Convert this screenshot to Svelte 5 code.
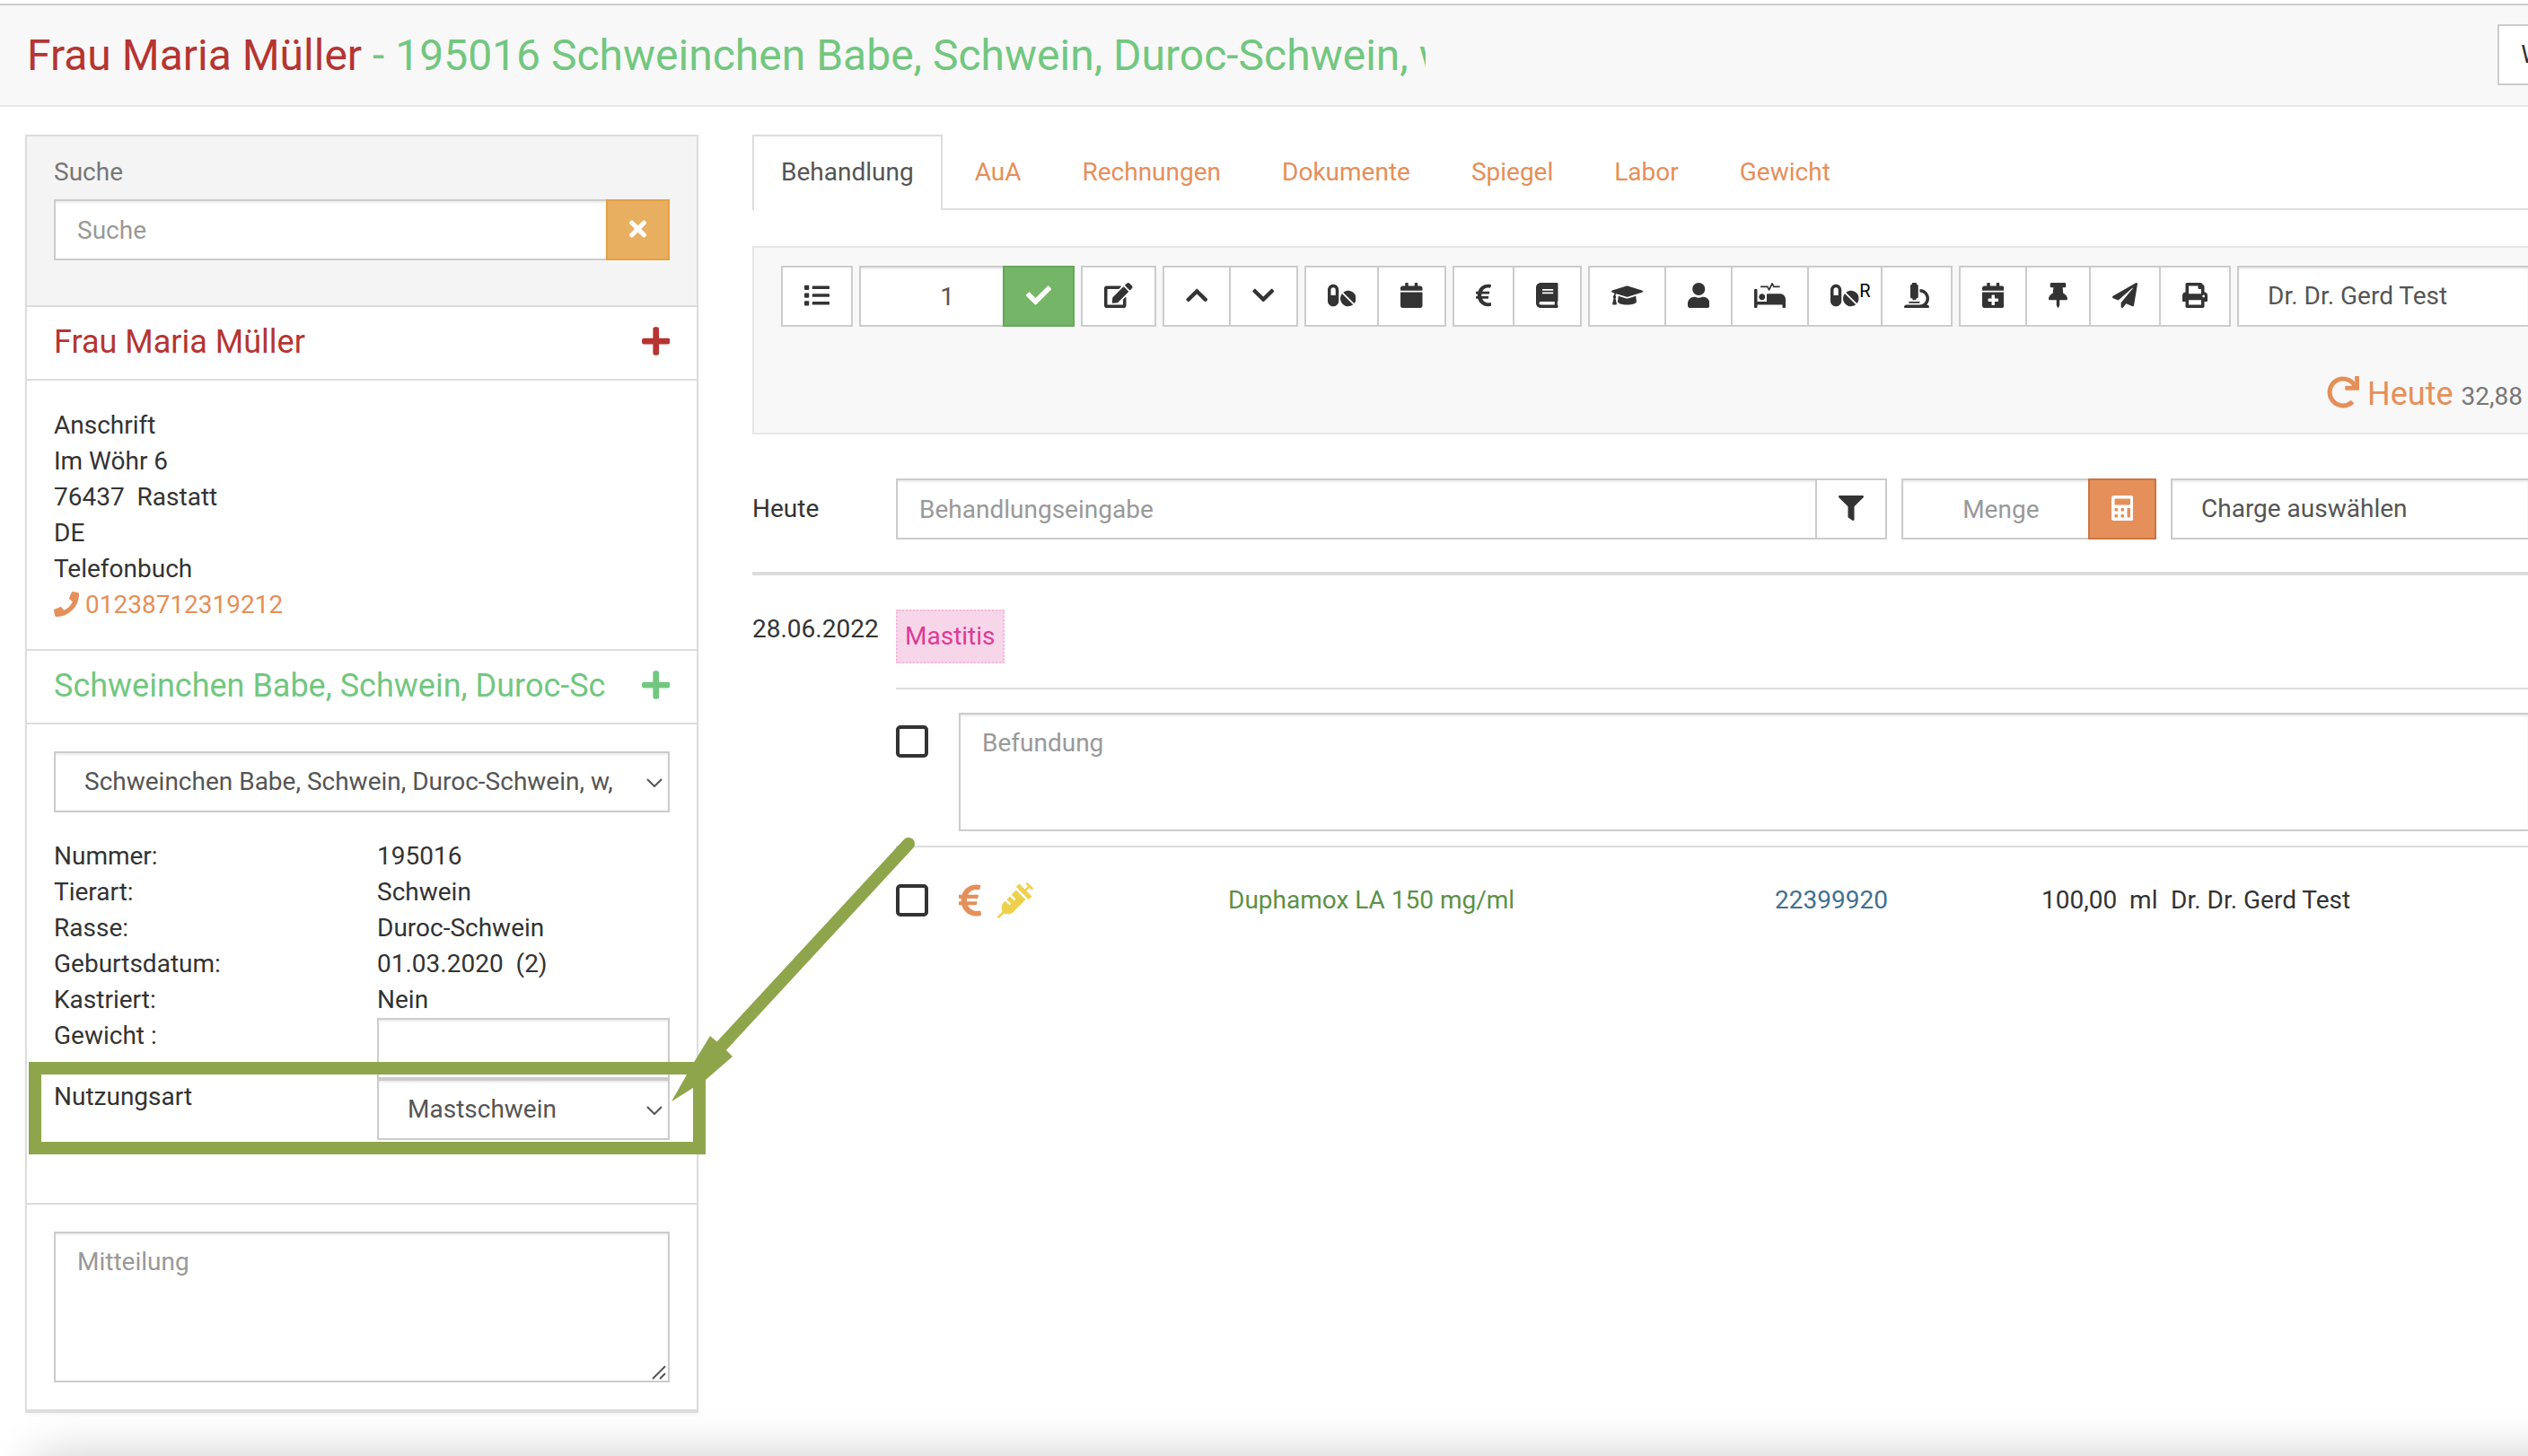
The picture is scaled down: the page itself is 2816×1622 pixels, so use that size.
<script>
  const icons = {
    list: [512, 'M80 368H16a16 16 0 0 0-16 16v64a16 16 0 0 0 16 16h64a16 16 0 0 0 16-16v-64a16 16 0 0 0-16-16zm0-320H16A16 16 0 0 0 0 64v64a16 16 0 0 0 16 16h64a16 16 0 0 0 16-16V64a16 16 0 0 0-16-16zm0 160H16a16 16 0 0 0-16 16v64a16 16 0 0 0 16 16h64a16 16 0 0 0 16-16v-64a16 16 0 0 0-16-16zm416 176H176a16 16 0 0 0-16 16v32a16 16 0 0 0 16 16h320a16 16 0 0 0 16-16v-32a16 16 0 0 0-16-16zm0-320H176a16 16 0 0 0-16 16v32a16 16 0 0 0 16 16h320a16 16 0 0 0 16-16V80a16 16 0 0 0-16-16zm0 160H176a16 16 0 0 0-16 16v32a16 16 0 0 0 16 16h320a16 16 0 0 0 16-16v-32a16 16 0 0 0-16-16z'],
    check: [512, 'M173.898 439.404l-166.4-166.4c-9.997-9.997-9.997-26.206 0-36.204l36.203-36.204c9.997-9.998 26.207-9.998 36.204 0L192 312.69 432.095 72.596c9.997-9.997 26.207-9.997 36.204 0l36.203 36.204c9.997 9.997 9.997 26.206 0 36.204l-294.4 294.401c-9.998 9.997-26.207 9.997-36.204-.001z'],
    times: [352, 'M242.72 256l100.07-100.07c12.28-12.28 12.28-32.19 0-44.48l-22.24-22.24c-12.28-12.28-32.19-12.28-44.48 0L176 189.28 75.93 89.21c-12.28-12.28-32.19-12.28-44.48 0L9.21 111.45c-12.28 12.28-12.28 32.19 0 44.48L109.28 256 9.21 356.07c-12.28 12.28-12.28 32.19 0 44.48l22.24 22.24c12.28 12.28 32.2 12.28 44.48 0L176 322.72l100.07 100.07c12.28 12.28 32.2 12.28 44.48 0l22.24-22.24c12.28-12.28 12.28-32.19 0-44.48L242.72 256z'],
    edit: [576, 'M402.6 83.2l90.2 90.2c3.8 3.8 3.8 10 0 13.8L274.4 405.6l-92.8 10.3c-12.4 1.4-22.9-9.1-21.5-21.5l10.3-92.8L388.8 83.2c3.8-3.8 10-3.8 13.8 0zm162-22.9l-48.8-48.8c-15.2-15.2-39.9-15.2-55.2 0l-35.4 35.4c-3.8 3.8-3.8 10 0 13.8l90.2 90.2c3.8 3.8 10 3.8 13.8 0l35.4-35.4c15.2-15.3 15.2-40 0-55.2zM384 346.2V448H64V128h229.8c3.2 0 6.2-1.3 8.5-3.5l40-40c7.6-7.6 2.2-20.5-8.5-20.5H48C21.5 64 0 85.5 0 112v352c0 26.5 21.5 48 48 48h352c26.5 0 48-21.5 48-48V306.2c0-10.7-12.9-16-20.5-8.5l-40 40c-2.2 2.3-3.5 5.3-3.5 8.5z'],
    up: [448, 'M240.971 130.524l194.343 194.343c9.373 9.373 9.373 24.569 0 33.941l-22.667 22.667c-9.357 9.357-24.522 9.375-33.901.04L224 227.495 69.255 381.516c-9.379 9.335-24.544 9.317-33.901-.04l-22.667-22.667c-9.373-9.373-9.373-24.569 0-33.941L207.03 130.525c9.372-9.373 24.568-9.373 33.941-.001z'],
    down: [448, 'M207.029 381.476L12.686 187.132c-9.373-9.373-9.373-24.569 0-33.941l22.667-22.667c9.357-9.357 24.522-9.375 33.901-.04L224 284.505l154.745-154.021c9.379-9.335 24.544-9.317 33.901.04l22.667 22.667c9.373 9.373 9.373 24.569 0 33.941L240.971 381.476c-9.373 9.372-24.569 9.372-33.942 0z'],
    pills: [576, 'M112 32C50.1 32 0 82.1 0 144v224c0 61.9 50.1 112 112 112s112-50.1 112-112V144c0-61.9-50.1-112-112-112zm48 224H64V144c0-26.5 21.5-48 48-48s48 21.5 48 48v112zm139.7-29.7c-3.5-3.5-9.4-3.1-12.3.8-45.3 62.5-40.4 150.1 15.9 206.4 56.3 56.3 143.9 61.2 206.4 15.9 4-2.9 4.3-8.8.8-12.3L299.7 226.3zm229.8-19c-56.3-56.3-143.9-61.2-206.4-15.9-4 2.9-4.3 8.8-.8 12.3l210.8 210.8c3.5 3.5 9.4 3.1 12.3-.8 45.3-62.6 40.5-150.1-15.9-206.4z'],
    calendar: [448, 'M12 192h424c6.6 0 12 5.4 12 12v260c0 26.5-21.5 48-48 48H48c-26.5 0-48-21.5-48-48V204c0-6.6 5.4-12 12-12zm436-44v-36c0-26.5-21.5-48-48-48h-48V12c0-6.6-5.4-12-12-12h-40c-6.6 0-12 5.4-12 12v52H160V12c0-6.6-5.4-12-12-12h-40c-6.6 0-12 5.4-12 12v52H48C21.5 64 0 85.5 0 112v36c0 6.6 5.4 12 12 12h424c6.6 0 12-5.4 12-12z'],
    euro: [320, 'M310.706 413.765c-1.314-6.63-7.835-10.872-14.424-9.369-10.692 2.439-27.422 5.413-45.426 5.413-56.763 0-101.929-34.79-121.461-85.449h113.689a12 12 0 0 0 11.708-9.369l6.373-28.36c1.686-7.502-4.019-14.631-11.708-14.631H115.22c-1.21-14.328-1.414-28.287.137-42.245H261.95a12 12 0 0 0 11.723-9.434l6.512-29.755c1.638-7.484-4.061-14.566-11.723-14.566H130.184c20.633-44.991 62.69-75.03 117.619-75.03 14.486 0 28.564 2.25 37.851 4.145 6.216 1.268 12.347-2.498 14.002-8.623l11.991-44.368c1.822-6.741-2.465-13.616-9.326-14.917C290.217 34.912 270.71 32 249.635 32 152.451 32 74.03 92.252 45.075 176H12c-6.627 0-12 5.373-12 12v29.755c0 6.627 5.373 12 12 12h21.569c-1.009 13.607-1.181 29.287-.181 42.245H12c-6.627 0-12 5.373-12 12v28.36c0 6.627 5.373 12 12 12h30.114C67.139 414.692 145.264 480 249.635 480c26.301 0 48.562-4.544 61.101-7.788 6.167-1.595 10.027-7.708 8.788-13.957l-8.818-44.49z'],
    book: [448, 'M448 360V24c0-13.3-10.7-24-24-24H96C43 0 0 43 0 96v320c0 53 43 96 96 96h328c13.3 0 24-10.7 24-24v-16c0-7.5-3.5-14.3-8.9-18.7-4.2-15.4-4.2-59.3 0-74.7 5.4-4.3 8.9-11.1 8.9-18.6zM128 134c0-3.3 2.7-6 6-6h212c3.3 0 6 2.7 6 6v20c0 3.3-2.7 6-6 6H134c-3.3 0-6-2.7-6-6v-20zm0 64c0-3.3 2.7-6 6-6h212c3.3 0 6 2.7 6 6v20c0 3.3-2.7 6-6 6H134c-3.3 0-6-2.7-6-6v-20zm253.4 250H96c-17.7 0-32-14.3-32-32 0-17.6 14.4-32 32-32h285.4c-1.9 17.1-1.9 46.9 0 64z'],
    graduation: [640, 'M622.34 153.2L343.4 67.5c-15.2-4.67-31.6-4.67-46.79 0L17.66 153.2c-23.54 7.23-23.54 38.36 0 45.59l48.63 14.94c-10.67 13.19-17.23 29.28-17.88 46.9C38.78 266.15 32 276.11 32 288c0 10.78 5.68 19.85 13.86 25.65L20.33 428.53C18.11 438.52 25.71 448 35.94 448h56.11c10.24 0 17.84-9.48 15.62-19.47L82.14 313.65C90.32 307.85 96 298.78 96 288c0-11.57-6.47-21.25-15.66-26.87.76-15.02 8.44-28.3 20.69-36.72L296.6 284.5c9.06 2.78 26.44 6.25 46.79 0l278.95-85.7c23.55-7.24 23.55-38.36 0-45.6zM352.79 315.09c-28.53 8.76-52.84 3.92-65.59 0l-145.02-44.55L128 384c0 35.35 85.96 64 192 64s192-28.65 192-64l-14.18-113.47-145.03 44.56z'],
    user: [448, 'M224 256c70.7 0 128-57.3 128-128S294.7 0 224 0 96 57.3 96 128s57.3 128 128 128zm89.6 32h-16.7c-22.2 10.2-46.9 16-72.9 16s-50.6-5.8-72.9-16h-16.7C60.2 288 0 348.2 0 422.4V464c0 26.5 21.5 48 48 48h352c26.5 0 48-21.5 48-48v-41.6c0-74.2-60.2-134.4-134.4-134.4z'],
    bed: [640, 'M528 224H272c-8.8 0-16 7.2-16 16v144H64V144c0-8.8-7.2-16-16-16H16c-8.8 0-16 7.2-16 16v352c0 8.8 7.2 16 16 16h32c8.8 0 16-7.2 16-16v-48h512v48c0 8.8 7.2 16 16 16h32c8.8 0 16-7.2 16-16V336c0-61.9-50.1-112-112-112zM136 96h126.1l27.6 55.2c5.9 11.8 22.7 11.8 28.6 0L368 51.8 390.1 96H512c8.8 0 16-7.2 16-16s-7.2-16-16-16H409.9L382.3 8.8C376.4-3 359.6-3 353.7 8.8L304 108.2l-19.9-39.8c-1.4-2.7-4.1-4.4-7.2-4.4H136c-4.4 0-8 3.6-8 8v16c0 4.4 3.6 8 8 8zm24 256c35.3 0 64-28.7 64-64s-28.7-64-64-64-64 28.7-64 64 28.7 64 64 64z'],
    microscope: [512, 'M160 320h12v16c0 8.84 7.16 16 16 16h40c8.84 0 16-7.16 16-16v-16h12c17.67 0 32-14.33 32-32V64c0-17.67-14.33-32-32-32V16c0-8.84-7.16-16-16-16h-64c-8.84 0-16 7.16-16 16v16c-17.67 0-32 14.33-32 32v224c0 17.67 14.33 32 32 32zm304 128h-1.29C493.24 413.99 512 369.2 512 320c0-105.88-86.12-192-192-192v64c70.58 0 128 57.42 128 128s-57.42 128-128 128H48c-26.51 0-48 21.49-48 48 0 8.84 7.16 16 16 16h480c8.84 0 16-7.16 16-16 0-26.51-21.49-48-48-48zm-360-32h208c4.42 0 8-3.58 8-8v-16c0-4.42-3.58-8-8-8H104c-4.42 0-8 3.58-8 8v16c0 4.42 3.58 8 8 8z'],
    calendarPlus: [448, 'M436 160H12c-6.6 0-12-5.4-12-12v-36c0-26.5 21.5-48 48-48h48V12c0-6.6 5.4-12 12-12h40c6.6 0 12 5.4 12 12v52h128V12c0-6.6 5.4-12 12-12h40c6.6 0 12 5.4 12 12v52h48c26.5 0 48 21.5 48 48v36c0 6.6-5.4 12-12 12zM12 192h424c6.6 0 12 5.4 12 12v260c0 26.5-21.5 48-48 48H48c-26.5 0-48-21.5-48-48V204c0-6.6 5.4-12 12-12zm316 140c0-6.6-5.4-12-12-12h-60v-60c0-6.6-5.4-12-12-12h-40c-6.6 0-12 5.4-12 12v60h-60c-6.6 0-12 5.4-12 12v40c0 6.6 5.4 12 12 12h60v60c0 6.6 5.4 12 12 12h40c6.6 0 12-5.4 12-12v-60h60c6.6 0 12-5.4 12-12v-40z'],
    pin: [384, 'M298.028 214.267L285.793 96H328c13.255 0 24-10.745 24-24V24c0-13.255-10.745-24-24-24H56C42.745 0 32 10.745 32 24v48c0 13.255 10.745 24 24 24h42.207L85.972 214.267C37.465 236.82 0 277.261 0 328c0 13.255 10.745 24 24 24h136v104.007c0 1.242.289 2.467.845 3.578l24 48c2.941 5.882 11.364 5.893 14.311 0l24-48a8.008 8.008 0 0 0 .845-3.578V352h136c13.255 0 24-10.745 24-24-.001-51.183-37.983-91.42-85.973-113.733z'],
    plane: [512, 'M476 3.2L12.5 270.6c-18.1 10.4-15.8 35.6 2.2 43.2L121 358.4l287.3-253.2c5.5-4.9 13.3 2.6 8.6 8.3L176 407v80.5c0 23.6 28.5 32.9 42.5 15.8L282 426l124.6 52.2c14.2 6 30.4-2.9 33-18.2l72-432C515 7.8 493.3-6.8 476 3.2z'],
    print: [512, 'M448 192V77.25c0-8.49-3.37-16.62-9.37-22.63L393.37 9.37c-6-6-14.14-9.37-22.63-9.37H96C78.33 0 64 14.33 64 32v160c-35.35 0-64 28.65-64 64v112c0 8.84 7.16 16 16 16h48v96c0 17.67 14.33 32 32 32h320c17.67 0 32-14.33 32-32v-96h48c8.84 0 16-7.16 16-16V256c0-35.35-28.65-64-64-64zm-64 256H128v-96h256v96zm0-224H128V64h192v48c0 8.84 7.16 16 16 16h48v96zm48 72c-13.25 0-24-10.75-24-24 0-13.26 10.75-24 24-24s24 10.74 24 24c0 13.25-10.75 24-24 24z'],
    redo: [512, 'M500.33 0h-47.41a12 12 0 0 0-12 12.57l4 82.76A247.42 247.42 0 0 0 256 8C119.34 8 7.9 119.53 8 256.19 8.1 393.07 119.1 504 256 504a247.1 247.1 0 0 0 166.18-63.91 12 12 0 0 0 .48-17.43l-34-34a12 12 0 0 0-16.38-.55A176 176 0 1 1 402.1 157.8l-101.53-4.87a12 12 0 0 0-12.57 12v47.41a12 12 0 0 0 12 12h200.33a12 12 0 0 0 12-12V12a12 12 0 0 0-12-12z'],
    phone: [512, 'M493.4 24.6l-104-24c-11.3-2.6-22.9 3.3-27.5 13.9l-48 112c-4.2 9.8-1.4 21.3 6.9 28l60.6 49.6c-36 76.7-98.9 140.5-177.2 177.2l-49.6-60.6c-6.8-8.3-18.2-11.1-28-6.9l-112 48C3.9 366.5-2 378.1.6 389.4l24 104C27.1 504.2 36.7 512 48 512c256.1 0 464-207.5 464-464 0-11.2-7.7-20.9-18.6-23.4z'],
    plus: [448, 'M416 208H272V64c0-17.67-14.33-32-32-32h-32c-17.67 0-32 14.33-32 32v144H32c-17.67 0-32 14.33-32 32v32c0 17.67 14.33 32 32 32h144v144c0 17.67 14.33 32 32 32h32c17.67 0 32-14.33 32-32V304h144c17.67 0 32-14.33 32-32v-32c0-17.67-14.33-32-32-32z'],
    filter: [512, 'M487.976 0H24.028C2.71 0-8.047 25.866 7.058 40.971L192 225.941V432c0 7.831 3.821 15.17 10.237 19.662l80 55.98C298.02 518.69 320 507.493 320 487.98V225.941l184.947-184.97C520.021 25.896 509.338 0 487.976 0z'],
    calculator: [448, 'M400 0H48C22.4 0 0 22.4 0 48v416c0 25.6 22.4 48 48 48h352c25.6 0 48-22.4 48-48V48c0-25.6-22.4-48-48-48zM128 435.2c0 6.4-6.4 12.8-12.8 12.8H76.8c-6.4 0-12.8-6.4-12.8-12.8v-38.4c0-6.4 6.4-12.8 12.8-12.8h38.4c6.4 0 12.8 6.4 12.8 12.8v38.4zm0-128c0 6.4-6.4 12.8-12.8 12.8H76.8c-6.4 0-12.8-6.4-12.8-12.8v-38.4c0-6.4 6.4-12.8 12.8-12.8h38.4c6.4 0 12.8 6.4 12.8 12.8v38.4zm128 128c0 6.4-6.4 12.8-12.8 12.8h-38.4c-6.4 0-12.8-6.4-12.8-12.8v-38.4c0-6.4 6.4-12.8 12.8-12.8h38.4c6.4 0 12.8 6.4 12.8 12.8v38.4zm0-128c0 6.4-6.4 12.8-12.8 12.8h-38.4c-6.4 0-12.8-6.4-12.8-12.8v-38.4c0-6.4 6.4-12.8 12.8-12.8h38.4c6.4 0 12.8 6.4 12.8 12.8v38.4zm128 128c0 6.4-6.4 12.8-12.8 12.8h-38.4c-6.4 0-12.8-6.4-12.8-12.8V268.8c0-6.4 6.4-12.8 12.8-12.8h38.4c6.4 0 12.8 6.4 12.8 12.8v166.4zm0-256c0 6.4-6.4 12.8-12.8 12.8H76.8c-6.4 0-12.8-6.4-12.8-12.8V76.8C64 70.4 70.4 64 76.8 64h294.4c6.4 0 12.8 6.4 12.8 12.8v102.4z'],
    syringe: [512, 'M201.5 174.8l55.7 55.8c3.1 3.1 3.1 8.2 0 11.3l-11.3 11.3c-3.1 3.1-8.2 3.1-11.3 0l-55.7-55.8-45.3 45.3 55.8 55.8c3.1 3.1 3.1 8.2 0 11.3l-11.3 11.3c-3.1 3.1-8.2 3.1-11.3 0L111 265.2l-26.4 26.4c-17.3 17.3-25.6 41.1-23 65.4l7.1 63.6L2.3 487c-3.1 3.1-3.1 8.2 0 11.3l11.3 11.3c3.1 3.1 8.2 3.1 11.3 0l66.3-66.3 63.6 7.1c23.9 2.6 47.9-5.4 65.4-23l181.9-181.9-135.7-135.7-64.9 65zm308.2-93.3L430.5 2.3c-3.1-3.1-8.2-3.1-11.3 0l-11.3 11.3c-3.1 3.1-3.1 8.2 0 11.3l28.3 28.3-45.3 45.3-56.6-56.6-17-17c-3.1-3.1-8.2-3.1-11.3 0l-33.9 33.9c-3.1 3.1-3.1 8.2 0 11.3l17 17L424.8 223l17 17c3.1 3.1 8.2 3.1 11.3 0l33.9-34c3.1-3.1 3.1-8.2 0-11.3l-73.5-73.5 45.3-45.3 28.3 28.3c3.1 3.1 8.2 3.1 11.3 0l11.3-11.3c3.1-3.2 3.1-8.2 0-11.4z'],
  };

  const tabs = ['Behandlung', 'AuA', 'Rechnungen', 'Dokumente', 'Spiegel', 'Labor', 'Gewicht'];
  const address = ['Anschrift', 'Im Wöhr 6', '76437\u00a0 Rastatt', 'DE', 'Telefonbuch'];
  const facts = [
    ['Nummer:', '195016'],
    ['Tierart:', 'Schwein'],
    ['Rasse:', 'Duroc-Schwein'],
    ['Geburtsdatum:', '01.03.2020\u00a0 (2)'],
    ['Kastriert:', 'Nein'],
  ];
  const groups = [
    [['edit', 'Bearbeiten']],
    [['up', 'Nach oben'], ['down', 'Nach unten']],
    [['pills', 'Medikamente'], ['calendar', 'Kalender']],
    [['euro', 'Preis'], ['book', 'Katalog']],
    [['graduation', 'Ausbildung'], ['user', 'Person'], ['bed', 'Station'], ['pills', 'Rezept', 'R'], ['microscope', 'Labor']],
    [['calendarPlus', 'Termin'], ['pin', 'Anheften'], ['plane', 'Senden'], ['print', 'Drucken']],
  ];
</script>

{#snippet icon(name, size = '')}
  <svg class="icon {size}" viewBox="0 0 {icons[name][0]} 512" aria-hidden="true"><path d={icons[name][1]} /></svg>
{/snippet}

{#snippet caret()}
  <svg class="caret" viewBox="0 0 18 10" aria-hidden="true"><path d="M1 1l8 8 8-8" /></svg>
{/snippet}

<div class="page">
  <header>
    <h1><span class="owner">Frau Maria Müller</span> - 195016 Schweinchen Babe, Schwein, Duroc-Schwein, w</h1>
    <button class="btn cut">W</button>
  </header>

  <div class="layout">
    <aside>
      <section class="search">
        <label for="search">Suche</label>
        <div class="group">
          <input id="search" type="text" placeholder="Suche" />
          <button class="btn warning" aria-label="Suche leeren">{@render icon('times')}</button>
        </div>
      </section>

      <div class="bar owner">
        <h2>Frau Maria Müller</h2>
        <button class="plain" aria-label="Kunde hinzufügen">{@render icon('plus', 'mid')}</button>
      </div>
      <section class="body">
        {#each address as line}<div>{line}</div>{/each}
        <a href="#telefon">{@render icon('phone')} 01238712319212</a>
      </section>

      <div class="bar animal">
        <h2>Schweinchen Babe, Schwein, Duroc-Sc</h2>
        <button class="plain" aria-label="Tier hinzufügen">{@render icon('plus', 'mid')}</button>
      </div>
      <section class="body details">
        <div class="select">
          <select aria-label="Tier"><option>Schweinchen Babe, Schwein, Duroc-Schwein, w,</option></select>
          {@render caret()}
        </div>
        <dl>
          {#each facts as [name, value]}
            <dt>{name}</dt>
            <dd>{value}</dd>
          {/each}
        </dl>
        <div class="field">
          <label for="weight">Gewicht :</label>
          <input id="weight" type="text" />
        </div>
        <div class="field">
          <label for="usage">Nutzungsart</label>
          <div class="select">
            <select id="usage"><option>Mastschwein</option></select>
            {@render caret()}
          </div>
          <div class="highlight"></div>
          <svg class="arrow" viewBox="0 0 280 310" aria-hidden="true">
            <path class="shaft" d="M264 11L55 237" />
            <path d="M0 298L24 256 43 225 50 231 61 241 68 248 38 274z" />
          </svg>
        </div>
      </section>

      <section class="note">
        <div class="select">
          <textarea aria-label="Mitteilung" placeholder="Mitteilung"></textarea>
          <svg class="grip" viewBox="0 0 16 16" aria-hidden="true"><path d="M1 15L15 1M9 15l6-6" /></svg>
        </div>
      </section>
    </aside>

    <main>
      <nav>
        {#each tabs as tab, i}<a href="#{tab}" class:active={i === 0}>{tab}</a>{/each}
      </nav>

      <div class="panel">
        <div class="toolbar">
          <button class="btn" aria-label="Liste">{@render icon('list')}</button>
          <div class="group count">
            <input type="text" class="number" value="1" aria-label="Anzahl" />
            <button class="btn success" aria-label="Bestätigen">{@render icon('check')}</button>
          </div>
          {#each groups as group}
            <div class="group">
              {#each group as [name, label, sup]}
                <button class="btn" aria-label={label}>{@render icon(name)}{#if sup}<span class="sup">{sup}</span>{/if}</button>
              {/each}
            </div>
          {/each}
          <select class="doctor" aria-label="Behandler"><option>Dr. Dr. Gerd Test</option></select>
        </div>
        <div class="sum">
          <a href="#heute">{@render icon('redo', 'mid')} Heute</a>
          <span>32,88</span>
        </div>
      </div>

      <div class="entry">
        <label for="treatment">Heute</label>
        <div class="group treatment">
          <input id="treatment" type="text" placeholder="Behandlungseingabe" />
          <button class="btn" aria-label="Filter">{@render icon('filter')}</button>
        </div>
        <div class="group amount">
          <input type="text" class="number" placeholder="Menge" aria-label="Menge" />
          <button class="btn primary" aria-label="Rechner">{@render icon('calculator')}</button>
        </div>
        <select class="charge" aria-label="Charge"><option>Charge auswählen</option></select>
      </div>

      <div class="day">
        <div class="date">28.06.2022</div>
        <div class="records">
          <div class="diagnosis"><span class="tag">Mastitis</span></div>
          <div class="finding">
            <input type="checkbox" aria-label="Befundung auswählen" />
            <textarea aria-label="Befundung" placeholder="Befundung"></textarea>
          </div>
          <div class="record">
            <input type="checkbox" aria-label="Duphamox auswählen" />
            <span class="marks">
              <span class="orange">{@render icon('euro', 'big')}</span>
              <span class="yellow">{@render icon('syringe', 'big')}</span>
            </span>
            <span class="drug">Duphamox LA 150 mg/ml</span>
            <span class="batch">22399920</span>
            <span class="dose">100,00&nbsp; ml</span>
            <span>Dr. Dr. Gerd Test</span>
          </div>
        </div>
      </div>
    </main>
  </div>
  <div class="shade"></div>
</div>

<style>
  :global(body) {
    background: #fff;
    overflow-x: hidden;
  }
  * {
    box-sizing: border-box;
  }
  .page {
    min-height: 100vh;
    padding-top: 4px;
    overflow: hidden;
    font: 28px/40px Roboto, sans-serif;
    color: #333;
  }
  header {
    display: flex;
    align-items: center;
    justify-content: space-between;
    height: 115px;
    padding: 0 0 0 30px;
    background: #f8f8f8;
    border-top: 2px solid #ccc;
    border-bottom: 2px solid #e7e7e7;
  }
  h1,
  h2 {
    margin: 0;
    font-weight: 400;
    overflow: hidden;
    white-space: nowrap;
    color: #72c77f;
  }
  h1 {
    width: 1558px;
    font-size: 48px;
    line-height: 60px;
  }
  h2 {
    flex: 1;
    font-size: 36px;
    line-height: 44px;
  }
  .owner,
  .owner h2 {
    color: #b53532;
  }
  .animal {
    color: #72c77f;
  }
  .icon {
    height: 28px;
    vertical-align: -4px;
    fill: currentColor;
  }
  .icon.mid {
    height: 36px;
  }
  .icon.big {
    height: 40px;
    vertical-align: top;
  }
  input,
  select,
  textarea,
  button {
    margin: 0;
    border: 2px solid #ccc;
    border-radius: 0;
    background: #fff;
    font: inherit;
    color: #555;
  }
  input,
  select,
  textarea {
    display: block;
    width: 100%;
    min-width: 0;
    height: 68px;
    padding: 12px 24px;
    appearance: none;
    outline: none;
    box-shadow: inset 0 2px 2px rgba(0, 0, 0, 0.075);
  }
  select {
    padding: 0 48px 0 32px;
  }
  ::placeholder {
    color: #999;
    opacity: 1;
  }
  .btn {
    position: relative;
    flex: none;
    height: 68px;
    padding: 0 24px;
    color: #333;
  }
  .cut {
    margin-right: -43px;
    margin-bottom: 2px;
  }
  .warning {
    color: #fff;
    background: #e7af5f;
    border-color: #e5a145;
  }
  .success {
    color: #fff;
    background: #75b567;
    border-color: #65a956;
  }
  .primary {
    color: #fff;
    background: #e58f5a;
    border-color: #cb7542;
  }
  .plain {
    padding: 0 0 2px;
    border: 0;
    background: none;
    color: inherit;
    line-height: 36px;
  }
  .plain .icon {
    display: block;
  }
  .group {
    display: flex;
  }
  .group .btn + .btn,
  .treatment .btn {
    margin-left: -2px;
  }
  .group input {
    border-right: 0;
  }
  .treatment input {
    border-right: 2px solid #ccc;
  }
  .group .number {
    padding-right: 54px;
    text-align: right;
  }
  .sup {
    position: absolute;
    top: 14px;
    right: 11px;
    font-size: 20px;
    line-height: 24px;
    color: #000;
  }
  a {
    color: #e58f5a;
    text-decoration: none;
  }

  .layout {
    display: flex;
    align-items: flex-start;
    gap: 60px;
    padding: 31px 0 0 28px;
  }
  aside {
    flex: 0 0 750px;
    min-width: 0;
    border: 2px solid #ddd;
    border-bottom-width: 4px;
    box-shadow: 0 2px 4px rgba(0, 0, 0, 0.05);
  }
  .search {
    padding: 20px 30px 50px;
    background: #f4f4f4;
    color: #777;
  }
  .search label {
    display: block;
    margin-bottom: 10px;
  }
  .bar {
    display: flex;
    align-items: center;
    gap: 40px;
    height: 84px;
    padding: 0 30px 3px;
    border: solid #ddd;
    border-width: 2px 0;
  }
  .body {
    padding: 30px 30px 29px;
  }
  .body a {
    display: block;
  }
  .details {
    padding-bottom: 70px;
  }
  .select {
    position: relative;
  }
  .caret {
    position: absolute;
    right: 8px;
    top: 30px;
    width: 18px;
    height: 10px;
    fill: none;
    stroke: #555;
    stroke-width: 2;
    pointer-events: none;
  }
  .grip {
    position: absolute;
    right: 4px;
    bottom: 3px;
    width: 16px;
    height: 16px;
    stroke: #555;
    stroke-width: 2;
    pointer-events: none;
  }
  dl {
    display: grid;
    grid-template-columns: 360px 1fr;
    margin: 29px 0 0;
  }
  dd {
    margin: 0;
  }
  .field {
    position: relative;
    display: grid;
    grid-template-columns: 360px minmax(0, 1fr);
  }
  .highlight {
    position: absolute;
    inset: -19px -40px -16px -28px;
    border: 14px solid #8fa54b;
    pointer-events: none;
  }
  .arrow {
    position: absolute;
    left: 688px;
    top: -273px;
    width: 280px;
    height: 310px;
    fill: #8fa54b;
    pointer-events: none;
  }
  .shaft {
    stroke: #8fa54b;
    stroke-width: 14;
    stroke-linecap: round;
  }
  .note {
    padding: 30px;
    border-top: 2px solid #ddd;
  }
  .note textarea {
    height: 168px;
    resize: none;
  }

  main {
    flex: 1;
    min-width: 0;
  }
  nav {
    display: flex;
    gap: 4px;
    height: 84px;
    border-bottom: 2px solid #ddd;
  }
  nav a {
    height: 84px;
    padding: 20px 30px 0;
    border: 2px solid transparent;
    border-bottom: 0;
  }
  nav .active {
    color: #555;
    background: #fff;
    border-color: #ddd;
  }
  .panel {
    height: 210px;
    margin-top: 40px;
    padding: 20px 0 0 30px;
    background: #f8f8f8;
    border: 2px solid #e7e7e7;
    border-right: 0;
  }
  .toolbar {
    display: flex;
    gap: 7px;
  }
  .count {
    flex: 0 0 240px;
  }
  .toolbar .doctor {
    flex: 1;
    border-right: 0;
  }
  .sum {
    display: flex;
    align-items: baseline;
    justify-content: flex-end;
    gap: 9px;
    margin-top: 55px;
    padding-right: 6px;
    color: #777;
  }
  .sum a {
    font-size: 36px;
  }
  .entry {
    display: grid;
    grid-template-columns: 144px 1104px 284px 1fr;
    column-gap: 16px;
    align-items: center;
    padding: 49px 0 36px;
    border-bottom: 4px solid #ddd;
  }
  .entry .charge {
    border-right: 0;
  }
  .day {
    display: grid;
    grid-template-columns: 160px 1fr;
  }
  .date {
    padding-top: 40px;
  }
  .diagnosis {
    display: flex;
    padding: 38px 0 27px;
  }
  .tag {
    padding: 8px;
    border: 2px dotted #f3b9dc;
    background: #f8d6ea;
    color: #dd3b92;
    line-height: 40px;
  }
  .finding {
    display: flex;
    gap: 34px;
    padding: 26px 0 16px;
    border: solid #ddd;
    border-width: 2px 0;
  }
  .finding textarea {
    height: 132px;
    border-right: 0;
    resize: none;
  }
  input[type='checkbox'] {
    flex: none;
    width: 36px;
    height: 36px;
    padding: 0;
    border: 4px solid #333;
    border-radius: 5px;
    box-shadow: none;
  }
  .finding input[type='checkbox'] {
    margin-top: 14px;
  }
  .record {
    display: grid;
    grid-template-columns: 70px 300px 609px 297px 144px 1fr;
    align-items: center;
    padding-top: 39px;
  }
  .marks {
    display: flex;
    gap: 18px;
  }
  .orange {
    color: #e58f5a;
  }
  .yellow {
    color: #eed04c;
  }
  .drug {
    color: #5b9149;
  }
  .batch {
    color: #41708f;
  }
  .shade {
    position: fixed;
    top: 100%;
    left: 40px;
    right: -60px;
    height: 200px;
    box-shadow: 0 0 50px rgba(0, 0, 0, 0.2);
  }
</style>
